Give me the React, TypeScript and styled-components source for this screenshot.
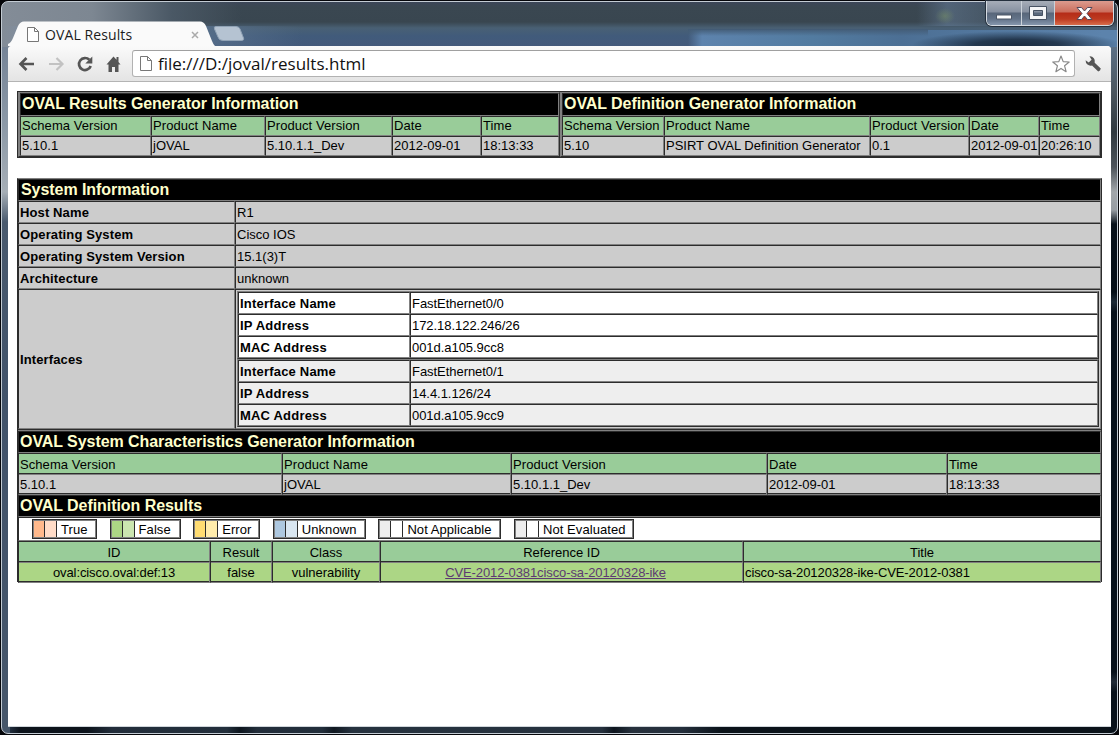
import React from 'react';
import styled, { createGlobalStyle } from 'styled-components';

const DARK = '#2c2c2c';
const GREY = '#808080';

const GlobalStyle = createGlobalStyle`
  * { box-sizing: border-box; }
  html, body { margin: 0; padding: 0; background: #000; overflow: hidden; }
`;

const Frame = styled.div`
  width: 1119px;
  height: 735px;
  padding: 1px;
  background: #05060a;
`;

const Glass = styled.div`
  width: 1117px;
  height: 733px;
  display: flex;
  flex-direction: column;
  padding: 0 6px 6px 6px;
  border: 1px solid #c3cbd3;
  border-radius: 7px;
  background:
    radial-gradient(ellipse 10px 8px at 943px 14px, rgba(120, 145, 100, 0.5), transparent),
    linear-gradient(90deg, transparent 915px, rgba(110, 135, 165, 0.45) 945px, rgba(110, 135, 165, 0.25) 985px, transparent 1100px) 0 0 / 100% 24px no-repeat,
    radial-gradient(ellipse 105px 14px at 1015px 43px, #1b2c40 0, rgba(27, 44, 64, 0.85) 40%, rgba(27, 44, 64, 0) 100%) 0 0 / 100% 45px no-repeat,
    linear-gradient(180deg, #435c76, rgba(67, 92, 118, 0)) 686px 27px / 240px 7px no-repeat,
    linear-gradient(90deg, transparent 686px, #5d83ad 700px, #527ba0 810px, #4c6f94 900px, #5c83ac 1100px) 0 28px / 100% 17px no-repeat,
    linear-gradient(90deg, #838c97 0, #7d8792 90px, #4a5865 170px, transparent 240px) 0 0 / 100% 24px no-repeat,
    linear-gradient(90deg, #838c97 0, #7d8ea4 40px, #58708c 180px, transparent 300px) 0 24px / 100% 21px no-repeat,
    linear-gradient(180deg, #3c4658 0, #3a4751 5px, #394650 20px, #496074 26px, #415b7b 34px, #43597a 45px) 0 0 / 100% 45px no-repeat,
    linear-gradient(180deg, #758396 45px, #8b98a6 120px, #a6aeb6 190px, #4a5a6e 220px, #42536a 400px, #46566a 700px) 0 0 / 8px 100% no-repeat,
    linear-gradient(180deg, #5d7186 45px, #4b565f 90px, #30393f 130px, #4c535a 165px, #a2a7ab 190px, #979da3 208px, #08111a 222px, #050e16 290px, #1d2a36 300px, #08111a 310px, #08111a 670px, #222c38 680px, #08111a 690px) 100% 0 / 8px 100% no-repeat,
    linear-gradient(90deg, #33445a 0, #0c131b 18px, #0c131b 85px, #222d3a 110px, #232f3c 225px, #0d151e 238px, #222d3a 255px, #222e3b 320px, #101821 332px, #26323f 350px, #26313e 600px, #0d151e 612px, #27313d 630px, #242f3c 680px, #0a1219 720px) 0 100% / 100% 8px no-repeat;
`;

const TitleBar = styled.header`
  height: 44px;
  flex: none;
  display: flex;
  align-items: flex-end;
  position: relative;
`;

const Tab = styled.div`
  position: relative;
  width: 207px;
  height: 25px;
  display: flex;
  align-items: center;
  gap: 6px;
  padding: 2px 16px 0 19px;
  color: #1c1c1c;
  font: 14px/20px 'Open Sans', 'Noto Sans', sans-serif;
  letter-spacing: 0.1px;
`;

const TabShape = styled.svg`
  position: absolute;
  left: 0;
  top: 0;
`;

const TabTitle = styled.span`
  position: relative;
  flex: 1;
  white-space: nowrap;
`;

const Icon = styled.svg`
  position: relative;
  display: block;
  flex: none;
`;

const NewTab = styled.svg`
  display: block;
  margin: 0 0 4px -2px;
`;

const WindowButtons = styled.div`
  position: absolute;
  right: -3px;
  top: -1px;
  display: flex;
  width: 128px;
  height: 25px;
  border: 1px solid #d5dbe2;
  border-top: 0;
  border-radius: 0 0 6px 6px;
  box-shadow: 0 0 0 1px #25303d;
  overflow: hidden;
`;

const WindowButton = styled.div<{ $w: number; $close?: boolean }>`
  width: ${p => p.$w}px;
  flex: none;
  display: flex;
  align-items: center;
  justify-content: center;
  border-right: ${p => (p.$close ? '0' : '1px solid #cbd2da')};
  background: ${p =>
    p.$close
      ? 'linear-gradient(180deg, #dc9b8e 0, #cb6e5d 11px, #b52c18 12px, #bd3a20 18px, #dd7552 25px)'
      : 'linear-gradient(180deg, #a6adb8 0, #8690a0 11px, #58667a 12px, #637389 18px, #8b9db3 25px)'};
`;

const Client = styled.main`
  flex: 1;
  display: flex;
  flex-direction: column;
  background: #fff;
  border-radius: 4px 4px 0 0;
  overflow: hidden;
  border-bottom: 1px solid #cfd5da;
`;

const Toolbar = styled.nav`
  height: 36px;
  flex: none;
  display: flex;
  align-items: center;
  gap: 9px;
  padding: 0 0 0 10px;
  background: linear-gradient(180deg, #fafafa, #f1f1f1 40%, #e4e4e4);
  border-bottom: 1px solid #b4b4b4;
`;

const NavIcons = styled.div`
  display: flex;
  gap: 11px;
  width: 105px;
`;

const AddressBar = styled.div`
  width: 943px;
  height: 27px;
  display: flex;
  align-items: center;
  gap: 6px;
  padding: 0 4px 0 7px;
  background: #fff;
  border: 1px solid #b2b2b2;
  border-top-color: #a0a0a0;
  border-radius: 3px;
  color: #111;
  font: 17px/24px 'Open Sans', 'Noto Sans', sans-serif;
`;

const Url = styled.span`
  flex: 1;
  padding-top: 1px;
`;

const Report = styled.div`
  padding: 9px 9px 0;
  font: 13px/18px 'Liberation Sans', Arial, sans-serif;
  color: #000;
`;

const GeneratorPair = styled.section`
  display: flex;
  width: 1085px;
  height: 67px;
  margin-bottom: 20px;
  border: 1px solid ${DARK};
  background: ${GREY};
`;

const GeneratorTable = styled.div<{ $w: number }>`
  width: ${p => p.$w}px;
  padding-left: 1px;
  border: 1px solid;
  border-color: ${GREY} ${DARK} ${DARK} ${GREY};
`;

const Heading = styled.h2<{ $h?: number; $indent?: number; $section?: boolean }>`
  height: ${p => p.$h ?? 22}px;
  margin: ${p => (p.$section ? 2 : 0)}px 0 0;
  padding-left: ${p => p.$indent ?? 1}px;
  border: 1px solid;
  border-color: ${DARK} ${GREY} ${GREY} ${DARK};
  box-shadow: ${p => (p.$section ? `0 -1px 0 ${GREY}, 0 -2px 0 ${DARK}` : 'none')};
  background: #000;
  color: #ffffcc;
  font: bold 16px/20px 'Liberation Sans', Arial, sans-serif;
  letter-spacing: -0.06px;
  white-space: nowrap;
`;

const Row = styled.div<{ $cols: string; $h: number; $bg: string }>`
  display: grid;
  grid-template-columns: ${p => p.$cols};
  height: ${p => p.$h}px;
  background: ${p => p.$bg};
`;

const Cell = styled.div<{ $bold?: boolean; $center?: boolean; $track?: number; $padRight?: number }>`
  display: flex;
  align-items: center;
  justify-content: ${p => (p.$center ? 'center' : 'flex-start')};
  min-width: 0;
  padding-left: ${p => (p.$center ? 0 : 1)}px;
  padding-right: ${p => p.$padRight ?? 0}px;
  border: 1px solid;
  border-color: ${DARK} ${GREY} ${GREY} ${DARK};
  font-weight: ${p => (p.$bold ? 700 : 400)};
  letter-spacing: ${p => p.$track ?? (p.$bold ? 0.12 : 0)}px;
  white-space: nowrap;
`;

const Panel = styled.section`
  width: 1085px;
  border: 1px solid;
  border-color: ${GREY} ${DARK} ${DARK} ${DARK};
  background: ${GREY};

  ${Cell} {
    padding-top: 2px;
  }
`;

const InterfaceArea = styled.div`
  border: 1px solid;
  border-color: ${DARK} ${GREY} ${GREY} ${DARK};
  padding: 1px;
`;

const InterfaceTable = styled.div`
  height: 68px;
  border: 1px solid;
  border-color: ${GREY} ${DARK} ${DARK} ${GREY};
`;

const Legend = styled.div`
  display: flex;
  align-items: center;
  gap: 12.6px;
  height: 24px;
  padding-left: 13px;
  background: #fff;
  border: 1px solid;
  border-color: ${DARK} ${GREY} ${GREY} ${DARK};
`;

const LegendItem = styled.div<{ $w: number }>`
  display: flex;
  width: ${p => p.$w}px;
  height: 20px;
  border: 1px solid ${DARK};
  outline: 1px solid ${GREY};
  outline-offset: -2px;
`;

const Swatch = styled.div<{ $c: string }>`
  width: 12px;
  background: ${p => p.$c};
  border-right: 1px solid ${DARK};
`;

const LegendLabel = styled.div`
  flex: 1;
  padding: 1px 0 0 4px;
  line-height: 17px;
  letter-spacing: 0.07px;
  white-space: nowrap;
`;

const CveLink = styled.a`
  color: #5d3a72;
  text-decoration: underline;
`;

const HEAD = '#99cc99';
const BODY = '#cccccc';

function DataRow({ cols, values, bg, center, track }: { cols: string; values: string[]; bg: string; center?: boolean; track?: number }) {
  return (
    <Row $cols={cols} $h={20} $bg={bg}>
      {values.map((v, i) => (
        <Cell key={i} $center={center} $track={track}>{v}</Cell>
      ))}
    </Row>
  );
}

const systemRows = [
  ['Host Name', 'R1'],
  ['Operating System', 'Cisco IOS'],
  ['Operating System Version', '15.1(3)T'],
  ['Architecture', 'unknown'],
];

const interfaces = [
  { bg: '#ffffff', name: 'FastEthernet0/0', ip: '172.18.122.246/26', mac: '001d.a105.9cc8' },
  { bg: '#eeeeee', name: 'FastEthernet0/1', ip: '14.4.1.126/24', mac: '001d.a105.9cc9' },
];

const legend = [
  { label: 'True', w: 65, a: '#ffb98c', b: '#ffdcc8' },
  { label: 'False', w: 71, a: '#acd685', b: '#cbe6b0' },
  { label: 'Error', w: 67, a: '#ffdc72', b: '#ffecac' },
  { label: 'Unknown', w: 93, a: '#aec8e0', b: '#d9e6f1' },
  { label: 'Not Applicable', w: 123, a: '#eeeeee', b: '#ffffff' },
  { label: 'Not Evaluated', w: 120, a: '#eeeeee', b: '#ffffff' },
];

const generatorHead = ['Schema Version', 'Product Name', 'Product Version', 'Date', 'Time'];

function PageIcon() {
  return (
    <Icon width="12" height="15" viewBox="0 0 12 15">
      <path d="M.5.5h7l4 4v10H.5z" fill="#fff" stroke="#777" />
      <path d="M7.5.5v4h4" fill="none" stroke="#777" />
    </Icon>
  );
}

function Arrow({ color, flip }: { color: string; flip?: boolean }) {
  return (
    <Icon width="18" height="18" viewBox="0 0 18 18">
      <path
        d="M8.500 3 2.500 9l6 6M3 9H16"
        fill="none"
        stroke={color}
        strokeWidth={flip ? 2.2 : 2.6}
        transform={flip ? 'translate(18 0) scale(-1 1)' : undefined}
      />
    </Icon>
  );
}

export default function App() {
  const g1 = '131px 114px 127px 89px 78px';
  const g2 = '102px 206px 99px 70px 61px';
  const sys = '217px 866px';
  const inner = '172px 688px';
  const chars = '264px 229px 256px 180px 154px';
  const results = '192px 62px 108px 363px 358px';
  return (
    <>
      <GlobalStyle />
      <Frame>
        <Glass>
          <TitleBar>
            <Tab>
              <TabShape width="207" height="25" viewBox="0 0 207 25">
                <path d="M0 25V23Q3 22 5 17L10 5Q12 .5 16 .5H192Q196 .5 198 5L204 20Q205.500 24 207 25Z" fill="#fafafa" />
              </TabShape>
              <PageIcon />
              <TabTitle>OVAL Results</TabTitle>
              <Icon width="8" height="8" viewBox="0 0 8 8">
                <path d="m1 1 6 6M7 1 1 7" stroke="#aaa" strokeWidth="1.5" />
              </Icon>
            </Tab>
            <NewTab width="32" height="16" viewBox="0 0 32 16">
              <path d="M3 .5H23Q26 .5 27 3L30.500 12Q31.500 14.500 28 14.500H10Q6 14.500 5 11L1.500 3Q.5.5 3 .5Z" fill="#b5c3d2" stroke="#91a3b6" />
            </NewTab>
            <WindowButtons>
              <WindowButton $w={35}>
                <Icon width="18" height="8" viewBox="0 0 18 8" style={{ top: 3 }}>
                  <path d="M1.500 3h15v4h-15z" fill="#fff" stroke="#4c5666" />
                </Icon>
              </WindowButton>
              <WindowButton $w={33}>
                <Icon width="18" height="14" viewBox="0 0 18 14">
                  <path fillRule="evenodd" d="M.5.5h17v13H.5zM4.500 4.500v5h9v-5z" fill="#f4f5f7" stroke="#475263" />
                </Icon>
              </WindowButton>
              <WindowButton $w={58} $close>
                <Icon width="17" height="15" viewBox="0 0 17 15">
                  <path d="M1 1.500h4.500l3 3.500 3-3.500H16L11 7.500l5 6h-4.500l-3-3.500-3 3.500H1l5-6z" fill="#fff" stroke="#54485a" />
                </Icon>
              </WindowButton>
            </WindowButtons>
          </TitleBar>
          <Client>
            <Toolbar>
              <NavIcons>
                <Arrow color="#555" />
                <Arrow color="#c2c2c2" flip />
                <Icon width="18" height="18" viewBox="0 0 18 18">
                  <path d="M13.300 4.800A6 6 0 1 0 14.700 11" fill="none" stroke="#555" strokeWidth="2.700" />
                  <path d="M16.300 1.500V8.500H9.300z" fill="#555" />
                </Icon>
                <Icon width="18" height="18" viewBox="0 0 18 18">
                  <path d="M8.500 1.500 1.500 9.500h2v7.500h3.500v-5h3v5H13.500V9.500h2l-2-2.400V2h-2v2.700z" fill="#555" />
                </Icon>
              </NavIcons>
              <AddressBar>
                <PageIcon />
                <Url>file:///D:/joval/results.html</Url>
                <Icon width="18" height="18" viewBox="0 0 18 18">
                  <path d="m9 1 2.200 5.600 6 .4-4.600 3.800 1.500 5.900L9 13.400l-5.100 3.300 1.500-5.900L.8 7l6-.4z" fill="#fff" stroke="#8a8a8a" strokeWidth="1.200" strokeLinejoin="round" />
                </Icon>
              </AddressBar>
              <Icon width="18" height="18" viewBox="0 0 18 18">
                <path d="M5.500 1.300A5 5 0 0 1 10.700 7.800L16.800 13.600Q16.500 16 14.200 16.500L8 10.400A5 5 0 0 1 1.600 5.300L4.700 7.600 7.600 4.700z" fill="#555" />
              </Icon>
            </Toolbar>
            <Report>
              <GeneratorPair>
                <GeneratorTable $w={542}>
                  <Heading $h={23}>OVAL Results Generator Information</Heading>
                  <DataRow cols={g1} bg={HEAD} values={generatorHead} track={0.07} />
                  <DataRow cols={g1} bg={BODY} values={['5.10.1', 'jOVAL', '5.10.1.1_Dev', '2012-09-01', '18:13:33']} />
                </GeneratorTable>
                <GeneratorTable $w={541}>
                  <Heading $h={23}>OVAL Definition Generator Information</Heading>
                  <DataRow cols={g2} bg={HEAD} values={generatorHead} track={0.07} />
                  <DataRow cols={g2} bg={BODY} values={['5.10', 'PSIRT OVAL Definition Generator', '0.1', '2012-09-01', '20:26:10']} />
                </GeneratorTable>
              </GeneratorPair>
              <Panel>
                <Heading $indent={2}>System Information</Heading>
                {systemRows.map(([k, v]) => (
                  <Row key={k} $cols={sys} $h={22} $bg={BODY}>
                    <Cell $bold>{k}</Cell>
                    <Cell>{v}</Cell>
                  </Row>
                ))}
                <Row $cols={sys} $h={140} $bg={BODY}>
                  <Cell $bold>Interfaces</Cell>
                  <InterfaceArea>
                    {interfaces.map(f => (
                      <InterfaceTable key={f.name}>
                        {[['Interface Name', f.name], ['IP Address', f.ip], ['MAC Address', f.mac]].map(([k, v]) => (
                          <Row key={k} $cols={inner} $h={22} $bg={f.bg}>
                            <Cell $bold $track={0.2}>{k}</Cell>
                            <Cell $track={-0.05}>{v}</Cell>
                          </Row>
                        ))}
                      </InterfaceTable>
                    ))}
                  </InterfaceArea>
                </Row>
                <Heading $section>OVAL System Characteristics Generator Information</Heading>
                <DataRow cols={chars} bg={HEAD} values={generatorHead} track={0.07} />
                <DataRow cols={chars} bg={BODY} values={['5.10.1', 'jOVAL', '5.10.1.1_Dev', '2012-09-01', '18:13:33']} />
                <Heading $section>OVAL Definition Results</Heading>
                <Legend>
                  {legend.map(l => (
                    <LegendItem key={l.label} $w={l.w}>
                      <Swatch $c={l.a} />
                      <Swatch $c={l.b} />
                      <LegendLabel>{l.label}</LegendLabel>
                    </LegendItem>
                  ))}
                </Legend>
                <DataRow cols={results} bg={HEAD} center values={['ID', 'Result', 'Class', 'Reference ID', 'Title']} />
                <Row $cols={results} $h={20} $bg="#acd685">
                  <Cell $center $track={-0.1}>oval:cisco.oval:def:13</Cell>
                  <Cell $center>false</Cell>
                  <Cell $center>vulnerability</Cell>
                  <Cell $center $track={-0.1} $padRight={12}><CveLink>CVE-2012-0381cisco-sa-20120328-ike</CveLink></Cell>
                  <Cell $track={-0.1}>cisco-sa-20120328-ike-CVE-2012-0381</Cell>
                </Row>
              </Panel>
            </Report>
          </Client>
        </Glass>
      </Frame>
    </>
  );
}
